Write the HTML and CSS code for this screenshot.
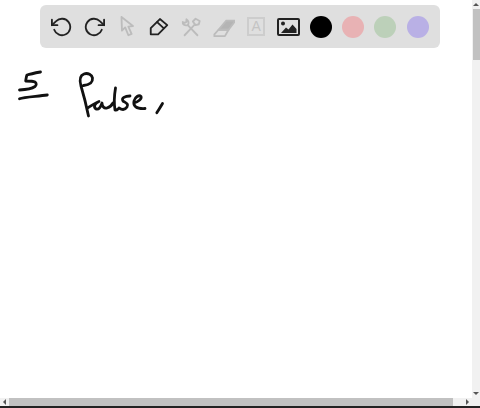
FILE: index.html
```html
<!DOCTYPE html>
<html lang="en">
<head>
    <meta charset="UTF-8">
    <meta name="viewport" content="width=device-width, initial-scale=1.0">
    <title>Whiteboard</title>
    <link rel="stylesheet" href="styles.css">
</head>
<body>
    <div class="window">
        <div class="board">
            <svg class="ink" width="472" height="398" viewBox="0 0 472 398" role="img" aria-label="Handwritten: 5 False,">
                <path d="M40.500 72 C35 73 30 74 27 75 C26 77 26 79 25.700 81 C29 81 33 81 35 82 C37 84 36.500 85 35 86.500 C32 88.500 28 89.500 19.500 90"/>
                <path d="M19.500 98.700 C24 97 36 96.500 47.300 95"/>
                <path d="M88.500 116 C86 104 84 96 81 86 C79 79 80 75.500 84 74 C88 72.500 92 75 92.500 78 C93 83 88 85 83.500 85.500"/>
                <path d="M87.500 108 C91 106 95 103 99 101.500 C95 103 93 107 96 109 C99 110 101 106 102 103 C102 106 104 109 107 108 C110 107 112 105 113 103"/>
                <path d="M115.500 88 C114.500 94 114 104 115 110 C116 110.500 117 110 118 109"/>
                <path d="M130 96 C125 96 121 98 123 101 C126 103 129 104 127 107 C125 110 122 110 119 108"/>
                <path d="M134 103 C138 102 142 99 141 96.500 C139 94.500 135 97 134 101 C133 106 136 109 145 108.500"/>
                <path d="M162.500 103.500 C160.500 107 158.500 110 156.800 112.800"/>
            </svg>
            <div class="toolbar">
                <div class="tool">
                    <svg class="icon" viewBox="0 0 24 24"><path d="M1 4v6h6"/><path d="M3.510 15a9 9 0 1 0 2.130-9.360L1 10"/></svg>
                </div>
                <div class="tool">
                    <svg class="icon" viewBox="0 0 24 24"><path d="M23 4v6h-6"/><path d="M20.490 15a9 9 0 1 1-2.120-9.360L23 10"/></svg>
                </div>
                <div class="tool">
                    <svg class="icon off" viewBox="0 0 24 24"><path d="M6 1 6.500 16 10 12.500 13.500 21 17 19.500 13.500 11.500 18.500 11Z"/></svg>
                </div>
                <div class="tool">
                    <svg class="icon" viewBox="0 0 24 24"><path d="M3 20V13.300L13 3.300 21 10 11 20Z"/><path d="M10 6.700 17 13.300"/></svg>
                </div>
                <div class="tool">
                    <svg class="icon off" viewBox="0 0 24 24"><path d="M19 21 8.500 10"/><path d="M5 21 16 9.500"/><path d="M3 6.500C2.500 9 5 11 8.500 10 10 8 9.500 5 7 3.500L7 6.500 5 7.500Z"/><path d="M14 6 17 3 21.500 5.500 20.500 9 17 10Z"/></svg>
                </div>
                <div class="tool">
                    <svg class="icon off" viewBox="0 0 24 24"><path class="eraser-top" d="M6 15 14.500 5H24.500L17 15Z"/><path d="M6 15 1.500 20V22H13L17 15Z"/></svg>
                </div>
                <div class="tool">
                    <div class="text-tool">A</div>
                </div>
                <div class="tool">
                    <div class="image-tool">
                        <svg viewBox="0 0 18 14"><circle cx="3.500" cy="3.500" r="2"/><path d="M1.500 13 6.500 7.500 9 9.500 13 4.500 17 9V13Z"/></svg>
                    </div>
                </div>
                <div class="tool"><div class="swatch black"></div></div>
                <div class="tool"><div class="swatch pink"></div></div>
                <div class="tool"><div class="swatch green"></div></div>
                <div class="tool"><div class="swatch purple"></div></div>
            </div>
        </div>
        <div class="scroll-y">
            <div class="arrow-up"></div>
            <div class="thumb-y"></div>
            <div class="arrow-down"></div>
        </div>
        <div class="scroll-x">
            <div class="arrow-left"></div>
            <div class="thumb-x"></div>
            <div class="arrow-right"></div>
        </div>
        <div class="corner"></div>
        <div class="edge"></div>
    </div>
</body>
</html>
```

FILE: styles.css
```css
html, body {
    margin: 0;
    height: 100%;
    background: white;
    overflow: hidden;
}
.window {
    width: 480px;
    height: 408px;
    display: grid;
    grid-template-columns: 472px 8px;
    grid-template-rows: 398px 8px 2px;
}
.board {
    position: relative;
    padding: 5px 32px 0 40px;
    background: white;
}
.ink {
    position: absolute;
    left: 0;
    top: 0;
}
.ink path {
    fill: none;
    stroke: #111;
    stroke-width: 2.8;
    stroke-linecap: round;
    stroke-linejoin: round;
}
.toolbar {
    width: 388px;
    height: 43px;
    padding: 0 6px;
    display: grid;
    grid-template-columns: repeat(12, 1fr);
    align-items: center;
    justify-items: center;
    background: #dfdfdf;
    border-radius: 6px;
}
.tool {
    width: 24px;
    height: 24px;
    display: flex;
    align-items: center;
    justify-content: center;
}
.icon {
    width: 22px;
    height: 22px;
    fill: none;
    stroke: #222;
    stroke-width: 2;
    stroke-linecap: round;
    stroke-linejoin: round;
}
.icon.off {
    stroke: #bcbcbc;
}
.icon .eraser-top {
    fill: #b4b4b4;
}
.text-tool {
    width: 14px;
    height: 15px;
    flex: none;
    border: 2px solid #cdcdcd;
    color: #c4c4c4;
    font: 14px/15px "Liberation Sans", Arial, sans-serif;
    text-align: center;
}
.image-tool {
    width: 19px;
    height: 14px;
    flex: none;
    border: 2px solid #222;
    border-radius: 2px;
    display: flex;
}
.image-tool svg {
    width: 100%;
    height: 100%;
    fill: #222;
}
.swatch {
    width: 22px;
    height: 22px;
    flex: none;
    border-radius: 50%;
}
.black { background: #000; }
.pink { background: #e8b2b4; }
.green { background: #bcd0b9; }
.purple { background: #b9b0e5; }
.scroll-y {
    display: flex;
    flex-direction: column;
    align-items: center;
    background: #f1f1f1;
}
.thumb-y {
    width: 7px;
    height: 51px;
    background: #c1c1c1;
}
.arrow-up {
    margin: 3px 0 3px;
    border: 3px solid transparent;
    border-top: 0;
    border-bottom-color: #555;
}
.arrow-down {
    margin: auto 0 3px;
    border: 3px solid transparent;
    border-bottom: 0;
    border-top-color: #555;
}
.scroll-x {
    display: flex;
    align-items: center;
    background: #f1f1f1;
}
.thumb-x {
    width: 444px;
    height: 8px;
    background: #c1c1c1;
}
.arrow-left {
    margin: 0 3px 0 3px;
    border: 3px solid transparent;
    border-left: 0;
    border-right-color: #555;
}
.arrow-right {
    margin: 0 3px 0 auto;
    border: 3px solid transparent;
    border-right: 0;
    border-left-color: #555;
}
.corner {
    background: #f1f1f1;
}
.edge {
    grid-column: 1 / -1;
    background: #222;
}
```
